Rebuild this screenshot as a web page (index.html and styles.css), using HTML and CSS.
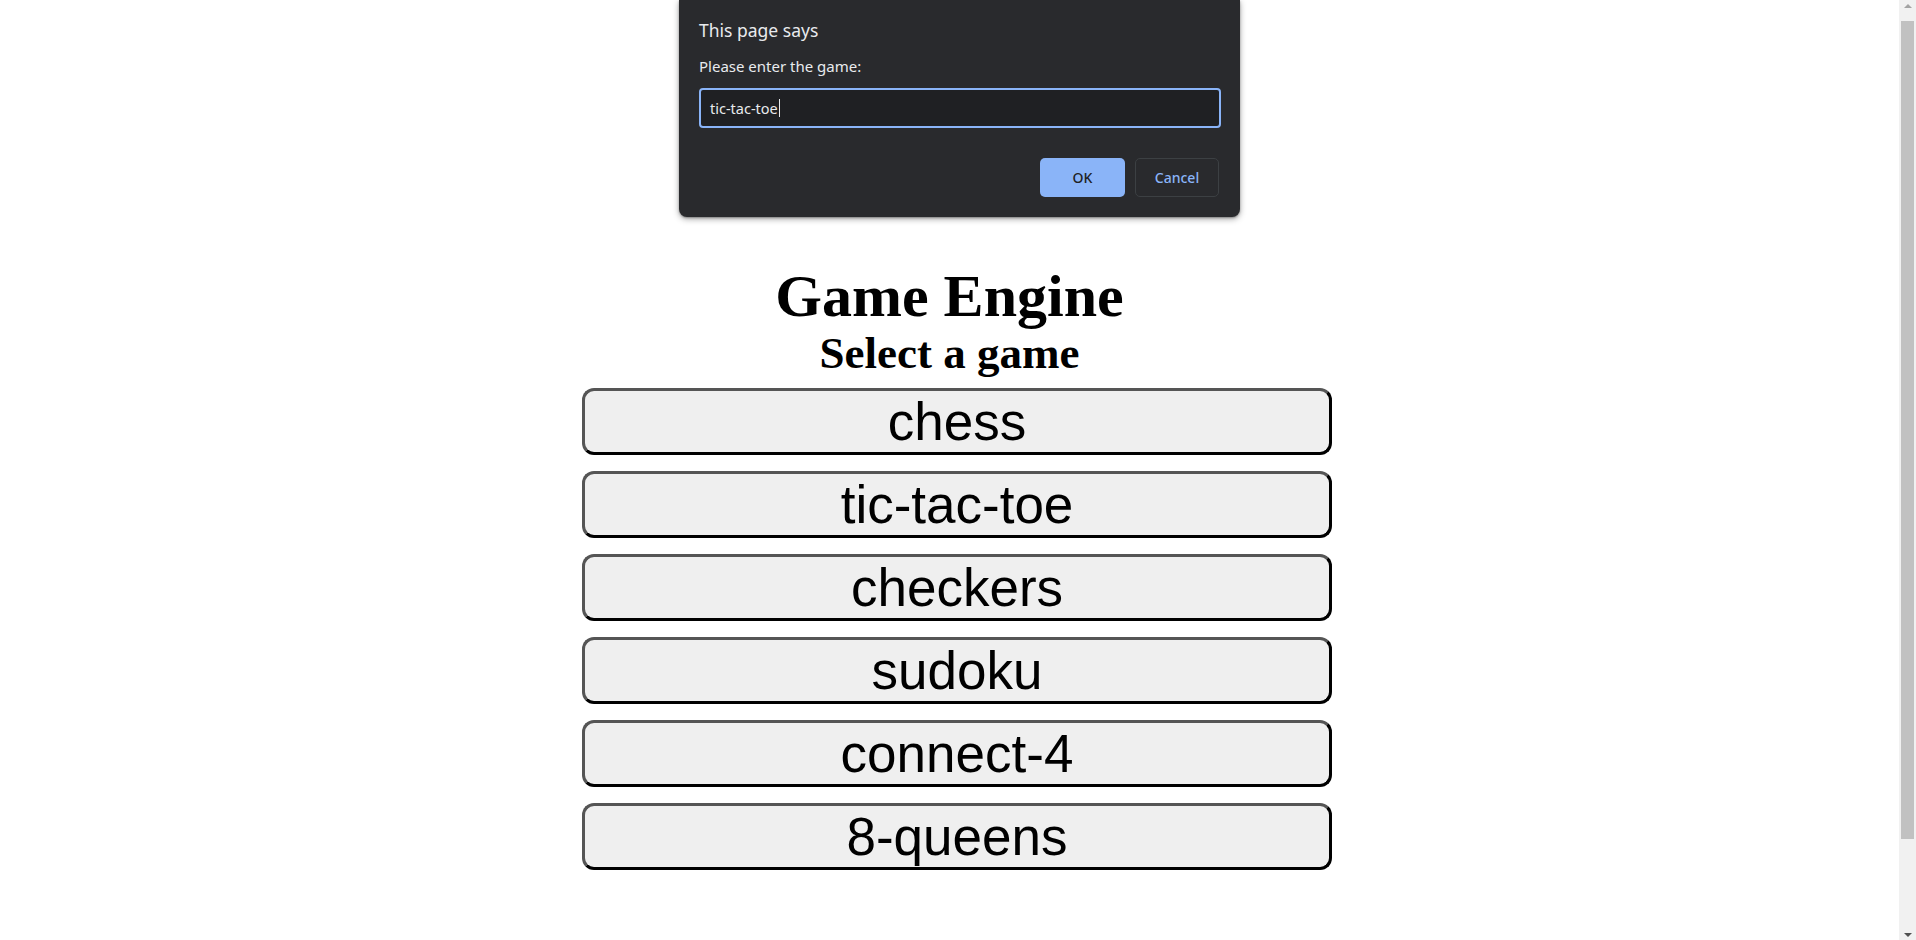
FILE: index.html
```html
<!DOCTYPE html>
<html lang="en">
<head>
<meta charset="utf-8">
<title>Game Engine</title>
<link rel="stylesheet" href="styles.css">
</head>
<body>
<div class="page">
  <main class="content">
    <h1 class="title">Game Engine</h1>
    <h2 class="subtitle">Select a game</h2>
    <div class="games">
      <button class="game">chess</button>
      <button class="game">tic-tac-toe</button>
      <button class="game">checkers</button>
      <button class="game">sudoku</button>
      <button class="game">connect-4</button>
      <button class="game">8-queens</button>
    </div>
  </main>
  <div class="scrollbar">
    <div class="sb-btn"><span class="tri-up"></span></div>
    <div class="sb-track"><div class="sb-thumb"></div></div>
    <div class="sb-btn"><span class="tri-down"></span></div>
  </div>
</div>

<div class="dialog">
  <div class="dlg-title">This page says</div>
  <div class="dlg-msg">Please enter the game:</div>
  <div class="dlg-input"><span class="dlg-value">tic-tac-toe</span><span class="caret"></span></div>
  <div class="dlg-actions">
    <button class="dlg-btn ok">OK</button>
    <button class="dlg-btn cancel">Cancel</button>
  </div>
</div>
</body>
</html>
```

FILE: styles.css
```css
html, body {
  margin: 0;
  padding: 0;
  height: 100%;
  overflow: hidden;
  background: #ffffff;
}

.page {
  display: flex;
  height: 940px;
}

.content {
  flex: 1;
  padding: 262px 8px 0;
  text-align: center;
  font-family: "Liberation Serif", "Times New Roman", serif;
  color: #000;
}

.title {
  margin: 0;
  font-size: 60px;
  line-height: 69px;
  font-weight: 700;
}

.subtitle {
  margin: 0;
  font-size: 45px;
  line-height: 45px;
  font-weight: 700;
}

.games {
  margin-top: 12px;
  margin-left: calc(50% - 367.5px);
  width: 750px;
  display: flex;
  flex-direction: column;
  gap: 16px;
}

.game {
  box-sizing: border-box;
  height: 67px;
  width: 100%;
  padding: 0;
  border: 3px solid;
  border-color: #555555 #000000 #000000 #555555;
  border-radius: 12px;
  background: #efefef;
  color: #000;
  font-family: "Liberation Sans", Arial, sans-serif;
  font-size: 53px;
  line-height: 61px;
}

/* fake classic scrollbar */
.scrollbar {
  width: 17px;
  flex: none;
  background: #f1f1f1;
  display: flex;
  flex-direction: column;
}

.sb-btn {
  height: 17px;
  display: flex;
  align-items: center;
  justify-content: center;
}

.tri-up {
  width: 0;
  height: 0;
  border-left: 4px solid transparent;
  border-right: 4px solid transparent;
  border-bottom: 4px solid #a3a3a3;
  margin-top: -6px;
}

.tri-down {
  width: 0;
  height: 0;
  border-left: 4px solid transparent;
  border-right: 4px solid transparent;
  border-top: 4px solid #505050;
  margin-top: 6px;
}

.sb-track {
  flex: 1;
  padding: 4px 2px 0;
}

.sb-thumb {
  height: 818px;
  background: #c1c1c1;
}

/* prompt dialog */
.dialog {
  position: absolute;
  top: 0;
  left: 679px;
  width: 561px;
  box-sizing: border-box;
  padding: 18px 19px 20px 20px;
  background: #292a2d;
  border-radius: 0 0 8px 8px;
  box-shadow: 0 2px 6px rgba(0, 0, 0, 0.35), 0 1px 2px rgba(0, 0, 0, 0.3);
  font-family: "Noto Sans", "Open Sans", sans-serif;
  color: #e8eaed;
}

.dlg-title {
  font-size: 17.5px;
  line-height: 24px;
}

.dlg-msg {
  margin-top: 14px;
  font-size: 15px;
  line-height: 20px;
}

.dlg-input {
  margin-top: 12px;
  box-sizing: border-box;
  height: 40px;
  border: 2px solid #8ab4f8;
  border-radius: 4px;
  background: #1f2023;
  padding: 0 9px;
  display: flex;
  align-items: center;
  font-size: 14.5px;
  line-height: 20px;
}

.caret {
  width: 1px;
  height: 18px;
  background: #e8eaed;
  margin-left: 1px;
}

.dlg-actions {
  margin-top: 30px;
  margin-right: 2px;
  display: flex;
  justify-content: flex-end;
  gap: 10px;
}

.dlg-btn {
  height: 39px;
  box-sizing: border-box;
  border-radius: 5px;
  font-family: "Noto Sans", "Open Sans", sans-serif;
  font-size: 14px;
  font-weight: 500;
  padding: 0;
  cursor: default;
}

.ok {
  width: 85px;
  background: #8ab4f8;
  color: #202124;
  border: none;
}

.cancel {
  width: 84px;
  background: transparent;
  color: #8ab4f8;
  border: 1px solid #3c4043;
}
```
